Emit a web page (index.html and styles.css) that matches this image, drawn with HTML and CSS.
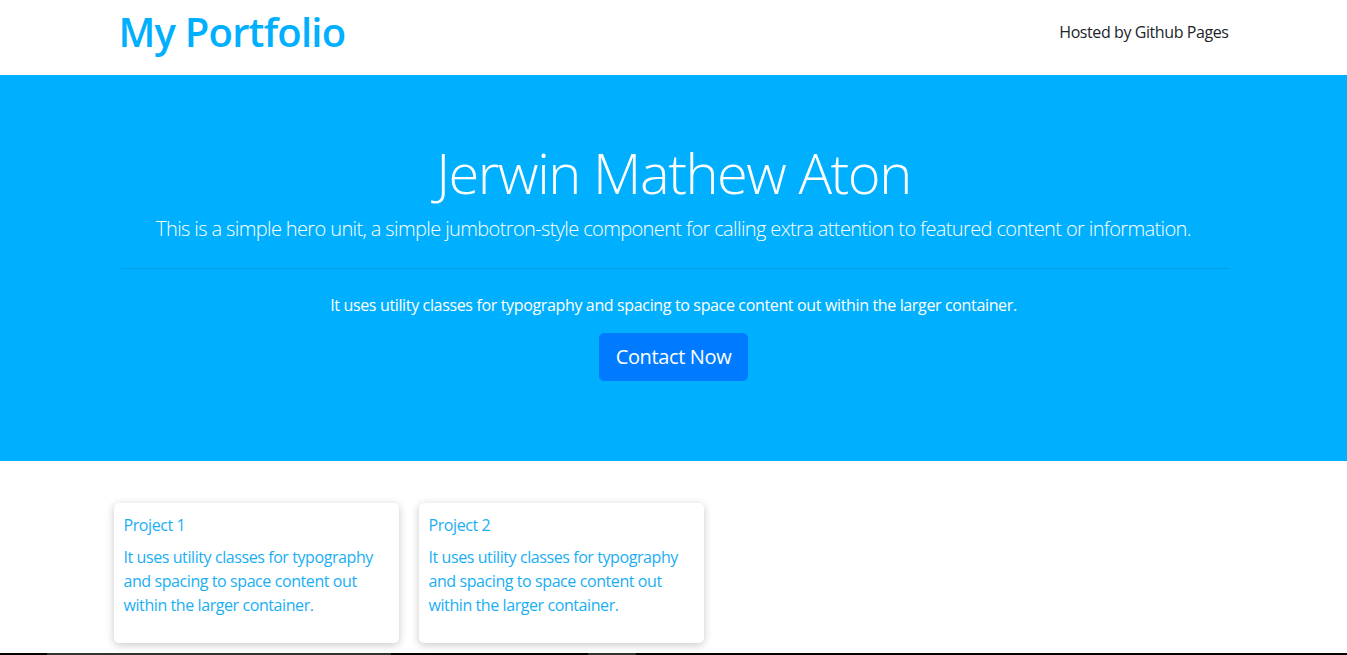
FILE: index.html
```html
<!DOCTYPE html>
<html lang="en">
<head>
<meta charset="utf-8">
<title>My Portfolio</title>
<link rel="stylesheet" href="styles.css">
</head>
<body>
<header class="site-header">
  <div class="container header-inner">
    <h1 class="brand">My Portfolio</h1>
    <span class="hosted">Hosted by Github Pages</span>
  </div>
</header>
<section class="hero">
  <div class="container hero-inner">
    <h1 class="hero-title">Jerwin Mathew Aton</h1>
    <p class="lead">This is a simple hero unit, a simple jumbotron-style component for calling extra attention to featured content or information.</p>
    <hr class="divider">
    <p class="hero-text">It uses utility classes for typography and spacing to space content out within the larger container.</p>
    <p class="hero-action"><a class="btn" href="#">Contact Now</a></p>
  </div>
</section>
<section class="container projects">
  <div class="card">
    <h5 class="card-title">Project 1</h5>
    <p class="card-text">It uses utility classes for typography and spacing to space content out within the larger container.</p>
  </div>
  <div class="card">
    <h5 class="card-title">Project 2</h5>
    <p class="card-text">It uses utility classes for typography and spacing to space content out within the larger container.</p>
  </div>
</section>
<footer class="bottom-bar"></footer>
</body>
</html>
```
FILE: styles.css
```css
* { box-sizing: border-box; }
html, body { margin: 0; padding: 0; }
body {
  font-family: "Open Sans", "Noto Sans", sans-serif;
  font-size: 16px;
  line-height: 1.5;
  color: #212529;
  background: #fff;
}
.container {
  width: 1140px;
  margin: 0 auto;
  padding: 0 15px;
}
.site-header { height: 75px; }
.header-inner {
  height: 75px;
  display: flex;
  align-items: center;
  justify-content: space-between;
  padding-bottom: 12px;
}
.brand {
  margin: 0;
  font-size: 40px;
  font-weight: 600;
  line-height: 1.2;
  color: #00b0ff;
  letter-spacing: -0.02em;
}
.hosted {
  font-size: 16px;
  color: #212529;
  letter-spacing: -0.026em;
}
.hero {
  background: #00b0ff;
  color: #fff;
  padding: 64px 0;
  margin-bottom: 32px;
  text-align: center;
}
.hero-title {
  margin: 0 0 8px;
  font-size: 56px;
  font-weight: 300;
  line-height: 1.2;
  letter-spacing: -0.026em;
}
.lead {
  margin: 0;
  font-size: 20px;
  font-weight: 300;
  line-height: 1.5;
  letter-spacing: -0.031em;
}
.divider {
  margin: 24px 0;
  border: 0;
  border-top: 1px solid rgba(0,0,0,0.1);
}
.hero-text {
  margin: 0 0 16px;
  letter-spacing: -0.022em;
}
.hero-action { margin: 0 0 16px; }
.btn {
  display: inline-block;
  background: #007bff;
  color: #fff;
  border: 1px solid #007bff;
  border-radius: 4.8px;
  padding: 8px 16px;
  font-size: 20px;
  line-height: 1.5;
  text-decoration: none;
  letter-spacing: -0.018em;
}
.projects {
  display: flex;
  gap: 20px;
  padding: 10px 10px 0;
}
.card {
  width: 285px;
  padding: 10px;
  background: #fff;
  border-radius: 5px;
  box-shadow: 0 2px 8px rgba(0,0,0,0.22);
  color: #1aaef5;
  letter-spacing: -0.026em;
}
.card-title {
  margin: 0 0 8px;
  font-size: 16px;
  font-weight: 400;
  line-height: 1.5;
}
.card-text { margin: 0 0 16px; }
.bottom-bar {
  margin-top: 10px;
  height: 2px;
  background: linear-gradient(to right, #000 0, #000 47px, #333 47px, #333 391px, #000 391px, #000 588px, #333 588px, #333 636px, #000 636px);
}
```
